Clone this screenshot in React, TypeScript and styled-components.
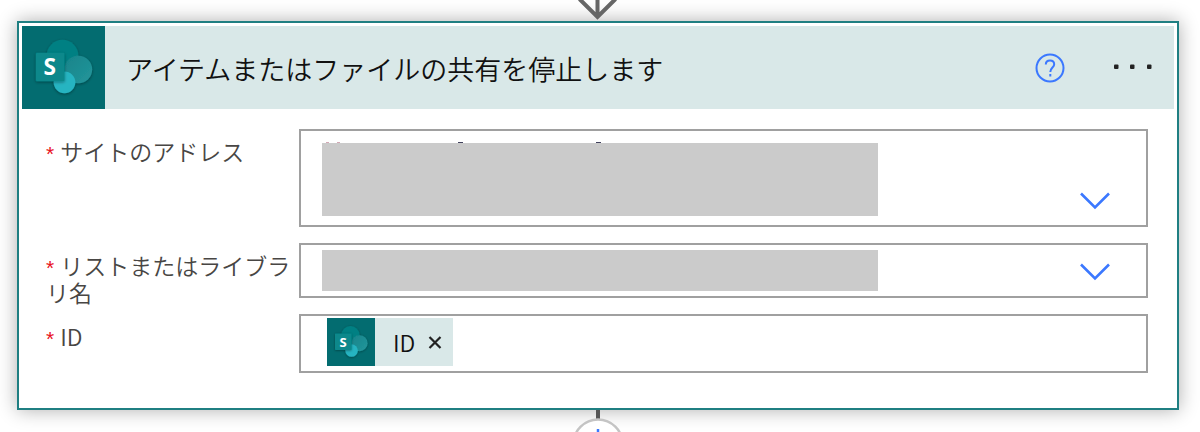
import React, { useState } from "react";
import styled, { createGlobalStyle } from "styled-components";

const teal = "#036c70";
const tint = "#d9e8e8";
const blue = "#3b78ff";

const GlobalStyle = createGlobalStyle`
  *, *::before, *::after { box-sizing: border-box; }
  body {
    margin: 0;
    background: #fff;
    color: #111;
    font-family: "Noto Sans CJK JP", sans-serif;
    font-weight: 350;
  }
`;

const Flow = styled.main`
  display: flex;
  flex-direction: column;
  padding: 0 21px 0 17px;
  overflow: hidden;
`;

const Connector = styled.div`
  position: relative;
  z-index: 1;
  display: flex;
  justify-content: center;

  svg { display: block; }
`;

const Card = styled.section`
  border: 2px solid #1f7f82;
  padding: 3px;
  background: #fff;
  box-shadow: 0 0 18px rgba(0, 0, 0, 0.32);
`;

const Header = styled.header`
  display: flex;
  align-items: center;
  background: ${tint};
`;

const IconTile = styled.span<{ $size: number }>`
  flex: none;
  display: block;
  width: ${(p) => p.$size}px;
  height: ${(p) => p.$size}px;
  background: ${teal};

  svg { display: block; width: 100%; height: 100%; }
`;

const Title = styled.h1`
  flex: 1;
  margin: 0;
  padding: 2px 0 0 21px;
  font-size: 27px;
  line-height: 36px;
  font-weight: 350;
`;

const HeaderActions = styled.div`
  display: flex;
  align-items: center;
  gap: 44px;
  padding-right: 17px;
`;

const IconButton = styled.button`
  display: flex;
  padding: 0;
  border: 0;
  background: none;
  color: inherit;
  cursor: pointer;
`;

const Fields = styled.form`
  display: flex;
  flex-direction: column;
  gap: 8px;
  padding: 20px 26px 24px 24px;
`;

const Row = styled.div`
  display: flex;
  align-items: flex-start;
`;

const Label = styled.label`
  flex: none;
  width: 253px;
  padding-top: 9px;
  color: #484644;
  font-size: 23px;
  line-height: 27px;
`;

const Required = styled.span`
  margin-right: 6px;
  color: #e81123;
  font-family: "Liberation Sans", sans-serif;
  font-size: 21px;
  line-height: 16px;
`;

const Field = styled.div<{ $height: number }>`
  position: relative;
  flex: 1;
  display: flex;
  align-items: flex-start;
  min-width: 0;
  height: ${(p) => p.$height}px;
  margin-bottom: 8px;
  border: 2px solid #a0a0a0;
  background: #fff;
`;

const Select = styled.select`
  width: 100%;
  height: 100%;
  padding: 0 80px 0 21px;
  border: 0;
  appearance: none;
  background: transparent;
  font: inherit;
`;

const Chevron = styled.svg`
  position: absolute;
  right: 35px;
  bottom: 15px;
  pointer-events: none;
`;

const Redaction = styled.span`
  position: absolute;
  inset: 12px auto 9px 21px;
  width: 66%;
  max-width: 556px;
  background: #cbcbcb;
  pointer-events: none;
`;

const SlimRedaction = styled(Redaction)`
  inset: 5px auto 5px 21px;
`;

const Peek = styled.svg`
  position: absolute;
  left: 21px;
  top: 10px;
  pointer-events: none;
`;

const Token = styled.span`
  flex: none;
  display: flex;
  align-items: center;
  margin: 2px 0 0 26px;
  background: ${tint};
  font-size: 23px;
  line-height: 32px;
`;

const TokenText = styled.span`
  padding: 0 13px 0 18px;
`;

const RemoveButton = styled(IconButton)`
  padding-right: 11px;
`;

const TokenInput = styled.input`
  flex: 1;
  min-width: 0;
  height: 100%;
  border: 0;
  outline: 0;
  background: transparent;
  font: inherit;
  font-size: 23px;
`;

const LogoLetter = styled.text`
  fill: #fff;
  font-family: "Open Sans", sans-serif;
  font-size: 23px;
  font-weight: 700;
  text-anchor: middle;
`;

function SharePointLogo({ id }: { id: string }) {
  return (
    <svg viewBox="0 0 84 84" aria-hidden="true">
      <defs>
        <filter id={id} x="-30%" y="-30%" width="160%" height="160%">
          <feDropShadow dx="0" dy="1" stdDeviation="1.6" floodOpacity="0.4" />
        </filter>
        <linearGradient id={`${id}-mid`} x1="0" y1="0" x2="1" y2="1">
          <stop offset="0" stopColor="#17848a" />
          <stop offset="1" stopColor="#23969b" />
        </linearGradient>
      </defs>
      <g filter={`url(#${id})`}>
        <circle cx="41" cy="30" r="16" fill="#058083" />
        <circle cx="57" cy="44" r="14" fill={`url(#${id}-mid)`} />
        <circle cx="43" cy="57" r="11" fill="#27b4c1" />
      </g>
      <rect x="14" y="27" width="29" height="29" rx="1" fill="#07888b" filter={`url(#${id})`} />
      <LogoLetter x="28" y="50">S</LogoLetter>
    </svg>
  );
}

function ChevronDown() {
  return (
    <Chevron width="32" height="18" viewBox="0 0 32 18" fill="none" stroke={blue} strokeWidth="2.6" aria-hidden="true">
      <path d="M2 1.5 16 15.5 30 1.5" />
    </Chevron>
  );
}

export default function App() {
  const [hasToken, setHasToken] = useState(true);

  return (
    <>
      <GlobalStyle />
      <Flow>
        <Connector>
          <svg width="40" height="21" viewBox="0 0 40 21" fill="none" stroke="#666" strokeWidth="4" aria-hidden="true">
            <path d="M19.5 0V17M1.5 -1 19.5 17 37.5 -1" />
          </svg>
        </Connector>

        <Card>
          <Header>
            <IconTile $size={83}>
              <SharePointLogo id="logo-large" />
            </IconTile>
            <Title>アイテムまたはファイルの共有を停止します</Title>
            <HeaderActions>
              <IconButton type="button" aria-label="ヘルプ">
                <svg width="30" height="30" viewBox="0 0 30 30" fill="none" stroke={blue} strokeWidth="2">
                  <circle cx="15" cy="15" r="13.5" />
                  <path d="M10.8 11.5C10.8 8.8 12.5 7.5 15 7.5S19.2 9 19.2 11.3C19.2 14.5 15.3 14.8 15.3 19M15.3 21V23.4" />
                </svg>
              </IconButton>
              <IconButton type="button" aria-label="メニュー">
                <svg width="48" height="24" viewBox="0 0 48 24" fill="#222">
                  <rect x="5" y="8.5" width="4.5" height="4.5" rx="1" />
                  <rect x="21" y="8.5" width="4.5" height="4.5" rx="1" />
                  <rect x="38" y="8.5" width="4.5" height="4.5" rx="1" />
                </svg>
              </IconButton>
            </HeaderActions>
          </Header>

          <Fields>
            <Row>
              <Label htmlFor="site">
                <Required>*</Required>サイトのアドレス
              </Label>
              <Field $height={98}>
                <Select id="site" />
                <Peek width="300" height="3" viewBox="0 0 300 3" aria-hidden="true">
                  <path d="M4 1h3v2h-3zM15 1h3v2h-3z" fill="#d3a9b5" />
                  <path d="M136 1h5v2h-5zM274 1h5v2h-5z" fill="#41415c" />
                </Peek>
                <Redaction />
                <ChevronDown />
              </Field>
            </Row>
            <Row>
              <Label htmlFor="list">
                <Required>*</Required>リストまたはライブラリ名
              </Label>
              <Field $height={55}>
                <Select id="list" />
                <SlimRedaction />
                <ChevronDown />
              </Field>
            </Row>
            <Row>
              <Label htmlFor="item-id">
                <Required>*</Required>ID
              </Label>
              <Field $height={59}>
                {hasToken && (
                  <Token>
                    <IconTile $size={48}>
                      <SharePointLogo id="logo-small" />
                    </IconTile>
                    <TokenText>ID</TokenText>
                    <RemoveButton type="button" aria-label="ID を削除" onClick={() => setHasToken(false)}>
                      <svg width="14" height="14" viewBox="0 0 14 14" fill="none" stroke="#222" strokeWidth="2.2">
                        <path d="M1.5 2 12.5 13M12.5 2 1.5 13" />
                      </svg>
                    </RemoveButton>
                  </Token>
                )}
                <TokenInput id="item-id" />
              </Field>
            </Row>
          </Fields>
        </Card>

        <Connector>
          <svg width="60" height="22" viewBox="0 0 60 22" fill="none" aria-hidden="true">
            <path d="M30 0V9" stroke="#555" strokeWidth="4" />
            <circle cx="30" cy="34" r="24.5" fill="#fff" stroke="#c4c4c4" strokeWidth="2.5" />
            <path d="M30 19V40" stroke={blue} strokeWidth="2.5" />
          </svg>
        </Connector>
      </Flow>
    </>
  );
}
